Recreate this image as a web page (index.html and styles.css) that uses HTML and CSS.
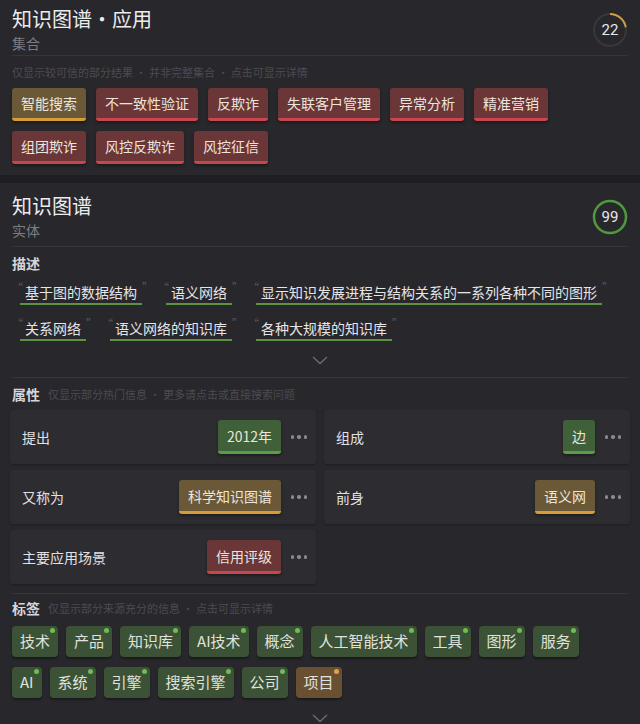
FILE: index.html
```html
<!DOCTYPE html>
<html lang="zh-CN">
<head>
<meta charset="utf-8">
<title>知识图谱</title>
<link rel="stylesheet" href="styles.css">
</head>
<body>
<section class="card card-top">
  <div class="head">
    <div class="head-text">
      <div class="title">知识图谱・应用</div>
      <div class="subtitle">集合</div>
    </div>
    <div class="ring">
      <svg width="36" height="36" viewBox="0 0 36 36">
        <circle cx="18" cy="18" r="16" fill="none" stroke="#38373c" stroke-width="2"/>
        <circle cx="18" cy="18" r="16" fill="none" stroke="#cf9c48" stroke-width="2" stroke-dasharray="22.1 100" transform="rotate(-90 18 18)"/>
      </svg>
      <span class="ring-num">22</span>
    </div>
  </div>
  <div class="divider"></div>
  <div class="hint">仅显示较可信的部分结果 · 并非完整集合 · 点击可显示详情</div>
  <div class="pills">
    <span class="pill gold">智能搜索</span>
    <span class="pill red">不一致性验证</span>
    <span class="pill red">反欺诈</span>
    <span class="pill red">失联客户管理</span>
    <span class="pill red">异常分析</span>
    <span class="pill red">精准营销</span>
    <span class="pill red">组团欺诈</span>
    <span class="pill red">风控反欺诈</span>
    <span class="pill red">风控征信</span>
  </div>
</section>

<section class="card card-main">
  <div class="head">
    <div class="head-text">
      <div class="title">知识图谱</div>
      <div class="subtitle">实体</div>
    </div>
    <div class="ring">
      <svg width="36" height="36" viewBox="0 0 36 36">
        <circle cx="18" cy="18" r="16" fill="none" stroke="#4f9a3f" stroke-width="2.5"/>
      </svg>
      <span class="ring-num">99</span>
    </div>
  </div>
  <div class="divider div-main"></div>

  <div class="sec-label">描述</div>
  <div class="descs">
    <span class="desc"><span class="q">“</span><span class="dt">基于图的数据结构</span><span class="q">”</span></span>
    <span class="desc"><span class="q">“</span><span class="dt">语义网络</span><span class="q">”</span></span>
    <span class="desc"><span class="q">“</span><span class="dt">显示知识发展进程与结构关系的一系列各种不同的图形</span><span class="q">”</span></span>
    <span class="desc"><span class="q">“</span><span class="dt">关系网络</span><span class="q">”</span></span>
    <span class="desc"><span class="q">“</span><span class="dt">语义网络的知识库</span><span class="q">”</span></span>
    <span class="desc"><span class="q">“</span><span class="dt">各种大规模的知识库</span><span class="q">”</span></span>
  </div>
  <div class="chevron">
    <svg width="16" height="9" viewBox="0 0 16 9"><polyline points="1,1 8,7.5 15,1" fill="none" stroke="#6c6b71" stroke-width="1.4"/></svg>
  </div>
  <div class="divider div-attr"></div>

  <div class="sec-row"><span class="sec-label inline">属性</span><span class="sec-hint">仅显示部分热门信息 · 更多请点击或直接搜索问题</span></div>
  <div class="attrs">
    <div class="attr"><span class="attr-label">提出</span><span class="pill green">2012年</span><span class="more"><i></i><i></i><i></i></span></div>
    <div class="attr"><span class="attr-label">组成</span><span class="pill green">边</span><span class="more"><i></i><i></i><i></i></span></div>
    <div class="attr"><span class="attr-label">又称为</span><span class="pill gold">科学知识图谱</span><span class="more"><i></i><i></i><i></i></span></div>
    <div class="attr"><span class="attr-label">前身</span><span class="pill gold">语义网</span><span class="more"><i></i><i></i><i></i></span></div>
    <div class="attr"><span class="attr-label">主要应用场景</span><span class="pill red">信用评级</span><span class="more"><i></i><i></i><i></i></span></div>
  </div>
  <div class="divider div-tags"></div>

  <div class="sec-row sec-tags"><span class="sec-label inline">标签</span><span class="sec-hint">仅显示部分来源充分的信息 · 点击可显示详情</span></div>
  <div class="tags">
    <span class="tag">技术</span>
    <span class="tag">产品</span>
    <span class="tag">知识库</span>
    <span class="tag">AI技术</span>
    <span class="tag">概念</span>
    <span class="tag">人工智能技术</span>
    <span class="tag">工具</span>
    <span class="tag">图形</span>
    <span class="tag">服务</span>
    <span class="tag">AI</span>
    <span class="tag">系统</span>
    <span class="tag">引擎</span>
    <span class="tag">搜索引擎</span>
    <span class="tag">公司</span>
    <span class="tag tag-gold">项目</span>
  </div>
  <div class="chevron chevron-bottom">
    <svg width="16" height="9" viewBox="0 0 16 9"><polyline points="1,1 8,7.5 15,1" fill="none" stroke="#6c6b71" stroke-width="1.4"/></svg>
  </div>
</section>
</body>
</html>
```

FILE: styles.css
```css
* { box-sizing: border-box; }
html, body { margin: 0; padding: 0; }
body {
  background: #1f1e22;
  width: 640px;
  height: 724px;
  overflow: hidden;
  font-family: "Noto Sans CJK SC", "Noto Sans", sans-serif;
  color: #e4e3e6;
}
.card {
  background: #28272c;
  padding: 0 12px;
}
.card-top {
  padding-top: 7px;
  padding-bottom: 11px;
}
.card-main {
  margin-top: 8px;
  padding-top: 11px;
  height: 560px;
}
.head {
  display: flex;
  justify-content: space-between;
  align-items: center;
}
.title {
  font-size: 20px;
  line-height: 24px;
  color: #ececee;
}
.subtitle {
  margin-top: 3px;
  font-size: 14px;
  line-height: 18px;
  color: #7d7c82;
}
.ring {
  position: relative;
  width: 36px;
  height: 36px;
}
.ring svg { display: block; }
.ring-num {
  position: absolute;
  left: 0; top: 0;
  width: 36px;
  height: 36px;
  line-height: 36px;
  text-align: center;
  font-family: "Roboto", "Noto Sans", sans-serif;
  font-size: 15px;
  color: #e8e8ea;
}
.divider {
  border-top: 1px solid #36353a;
  margin-top: 3px;
}
.div-main { margin-top: 7px; }
.div-attr { margin-top: 10px; }
.div-tags { margin-top: 9px; }
.hint {
  margin-top: 8px;
  font-size: 11px;
  line-height: 16px;
  color: #4c4b51;
}
.pills {
  margin-top: 8px;
  display: flex;
  flex-wrap: wrap;
  gap: 10px;
}
.pill {
  display: inline-block;
  font-size: 14px;
  line-height: 20px;
  padding: 5px 9px;
  border-bottom: 3px solid;
  border-radius: 3px;
  color: #ece5de;
  box-shadow: 0 2px 3px rgba(0,0,0,0.35);
  white-space: nowrap;
}
.pill.gold { background: #6a5836; border-bottom-color: #d49d3a; }
.pill.red { background: #6a3637; border-bottom-color: #c6484e; }
.pill.green { background: #3f6039; border-bottom-color: #5c9b48; }

.sec-label {
  margin-top: 6px;
  font-size: 14px;
  line-height: 20px;
  font-weight: bold;
  color: #d6d5d9;
}
.sec-label.inline { margin-top: 0; }
.sec-row {
  margin-top: 6px;
  display: flex;
  align-items: center;
  gap: 8px;
}
.sec-tags { margin-top: 4px; }
.sec-hint {
  font-size: 11px;
  color: #4c4b51;
}
.descs {
  margin-top: 9px;
  display: flex;
  flex-wrap: wrap;
  column-gap: 8px;
  row-gap: 13px;
}
.desc {
  display: inline-flex;
  align-items: flex-start;
}
.q {
  width: 8px;
  font-size: 11px;
  line-height: 12px;
  color: #57565c;
  text-align: center;
  margin-top: -1px;
}
.dt {
  font-size: 14px;
  line-height: 20px;
  padding: 0 5px 1px;
  border-bottom: 2.5px solid #5a9443;
  color: #e6e5e8;
  white-space: nowrap;
}
.chevron {
  margin-top: 12px;
  height: 14px;
  display: flex;
  justify-content: center;
  align-items: center;
}
.chevron svg { display: block; }
.chevron-bottom { margin-top: 13px; }

.attrs {
  margin: 6px -2px 0;
  display: grid;
  grid-template-columns: 1fr 1fr;
  column-gap: 8px;
  row-gap: 6px;
}
.attr {
  height: 54px;
  background: #2d2c31;
  border-radius: 3px;
  display: flex;
  align-items: center;
  padding: 0 8px 0 12px;
  box-shadow: 0 1px 2px rgba(0,0,0,0.25);
}
.attr-label {
  flex: 1;
  font-size: 14px;
  color: #e2e1e4;
}
.attr .pill {
  padding: 6px 9px 5px;
}
.more {
  display: flex;
  gap: 3px;
  margin-left: 9px;
  width: 18px;
  justify-content: center;
}
.more i {
  display: block;
  width: 3.5px;
  height: 3.5px;
  border-radius: 50%;
  background: #8b8a90;
}
.tags {
  margin-top: 8px;
  width: 590px;
  display: flex;
  flex-wrap: wrap;
  column-gap: 8px;
  row-gap: 10px;
}
.tag {
  position: relative;
  font-size: 15px;
  line-height: 20px;
  padding: 5px 8px 6px;
  background: #3b5237;
  border-radius: 4px;
  color: #e0e3dc;
  box-shadow: 0 2px 2px rgba(0,0,0,0.35);
}
.tag::after {
  content: "";
  position: absolute;
  right: 3px;
  top: 2px;
  width: 5px;
  height: 5px;
  border-radius: 50%;
  background: #6fbd52;
}
.tag-gold { background: #6a5033; }
.tag-gold::after { background: #e3a243; }
```
